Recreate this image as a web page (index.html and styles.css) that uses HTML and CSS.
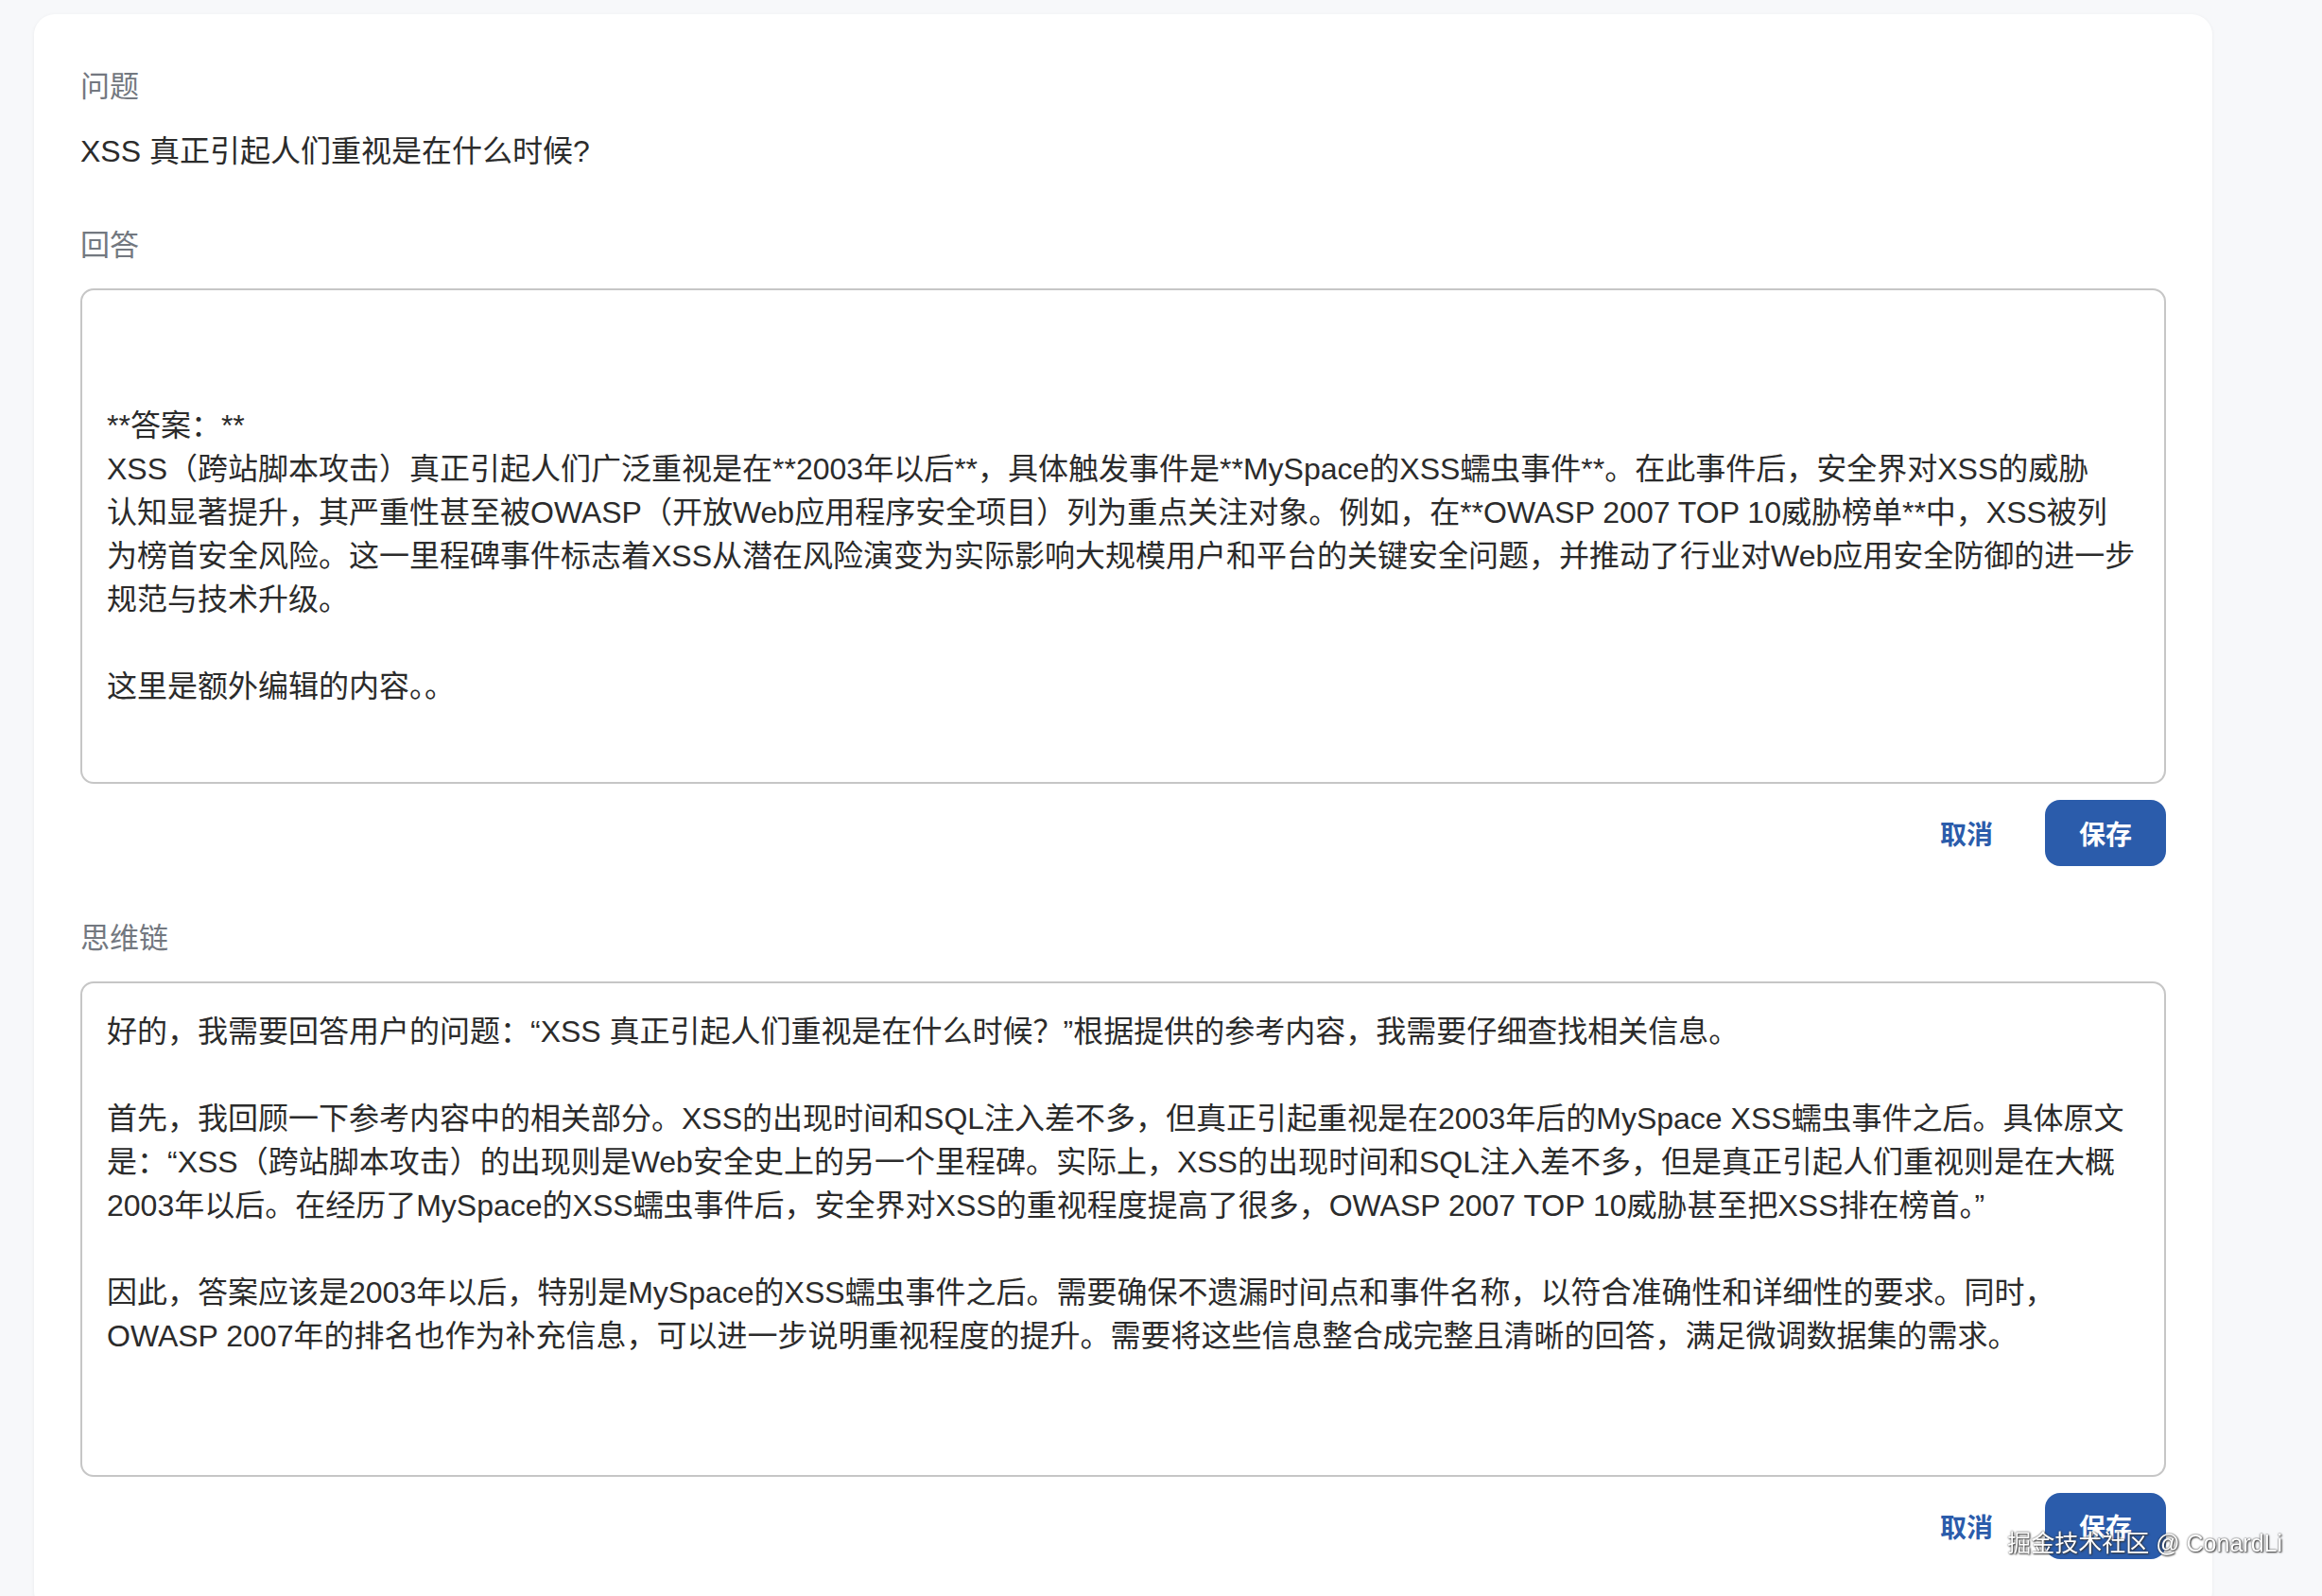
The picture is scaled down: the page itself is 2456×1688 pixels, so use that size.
FILE: index.html
```html
<!DOCTYPE html>
<html lang="zh-CN">
<head>
  <meta charset="UTF-8">
  <title>数据集编辑</title>
  <meta name="viewport" content="width=device-width, initial-scale=1.0">
  <link rel="stylesheet" href="styles.css">
</head>
<body>
  <div class="page">
    <div class="card">
      <div class="field">
        <div class="label">问题</div>
        <div class="question">XSS 真正引起人们重视是在什么时候?</div>
      </div>

      <div class="field">
        <div class="label">回答</div>
        <textarea class="editor" id="answer">


**答案：**
XSS（跨站脚本攻击）真正引起人们广泛重视是在**2003年以后**，具体触发事件是**MySpace的XSS蠕虫事件**。在此事件后，安全界对XSS的威胁
认知显著提升，其严重性甚至被OWASP（开放Web应用程序安全项目）列为重点关注对象。例如，在**OWASP 2007 TOP 10威胁榜单**中，XSS被列
为榜首安全风险。这一里程碑事件标志着XSS从潜在风险演变为实际影响大规模用户和平台的关键安全问题，并推动了行业对Web应用安全防御的进一步
规范与技术升级。

这里是额外编辑的内容。。</textarea>
        <div class="actions">
          <button class="btn-text">取消</button>
          <button class="btn-primary">保存</button>
        </div>
      </div>

      <div class="field">
        <div class="label">思维链</div>
        <textarea class="editor" id="cot">
好的，我需要回答用户的问题：“XSS 真正引起人们重视是在什么时候？”根据提供的参考内容，我需要仔细查找相关信息。

首先，我回顾一下参考内容中的相关部分。XSS的出现时间和SQL注入差不多，但真正引起重视是在2003年后的MySpace XSS蠕虫事件之后。具体原文
是：“XSS（跨站脚本攻击）的出现则是Web安全史上的另一个里程碑。实际上，XSS的出现时间和SQL注入差不多，但是真正引起人们重视则是在大概
2003年以后。在经历了MySpace的XSS蠕虫事件后，安全界对XSS的重视程度提高了很多，OWASP 2007 TOP 10威胁甚至把XSS排在榜首。”

因此，答案应该是2003年以后，特别是MySpace的XSS蠕虫事件之后。需要确保不遗漏时间点和事件名称，以符合准确性和详细性的要求。同时，
OWASP 2007年的排名也作为补充信息，可以进一步说明重视程度的提升。需要将这些信息整合成完整且清晰的回答，满足微调数据集的需求。</textarea>
        <div class="actions">
          <button class="btn-text">取消</button>
          <button class="btn-primary">保存</button>
        </div>
      </div>
    </div>
  </div>

  <div class="watermark">掘金技术社区 @ ConardLi</div>
</body>
</html>
```

FILE: styles.css
```css
body {
  margin: 0;
  background-color: #f7f8fa;
  font-family: "Liberation Sans", "Noto Sans CJK SC", sans-serif;
  color: #2b2b2b;
}
.page {
  padding: 15px 0 0 36px;
}
.card {
  width: 2304px;
  box-sizing: border-box;
  background: #fff;
  border-radius: 22px;
  box-shadow: 0 1px 4px rgba(0, 0, 0, 0.06);
  padding: 56px 49px;
}
.field + .field {
  margin-top: 56px;
}
.label {
  font-size: 31px;
  line-height: 42px;
  color: #737880;
  margin-bottom: 24px;
}
.question {
  font-size: 32px;
  line-height: 46px;
}
.editor {
  display: block;
  width: 100%;
  height: 524px;
  box-sizing: border-box;
  border: 2px solid #c6c6c6;
  border-radius: 14px;
  padding: 28px 26px;
  font-family: inherit;
  font-size: 32px;
  line-height: 46px;
  color: #2b2b2b;
  white-space: pre;
  overflow: hidden;
  resize: none;
  outline: none;
}
.actions {
  display: flex;
  justify-content: flex-end;
  gap: 27px;
  margin-top: 17px;
}
.actions button {
  height: 70px;
  border: none;
  font-family: inherit;
  font-size: 28px;
  font-weight: 600;
  cursor: pointer;
}
.btn-text {
  background: none;
  color: #2b5cab;
  padding: 0 28px;
}
.btn-primary {
  background-color: #2b5cab;
  color: #fff;
  border-radius: 16px;
  padding: 0 36px;
}
.btn-primary:hover {
  background-color: #234d91;
}
.watermark {
  position: fixed;
  right: 42px;
  bottom: 40px;
  font-size: 25px;
  color: #fff;
  text-shadow: 0 0 2px #333, 1px 1px 2px #333;
}
```
